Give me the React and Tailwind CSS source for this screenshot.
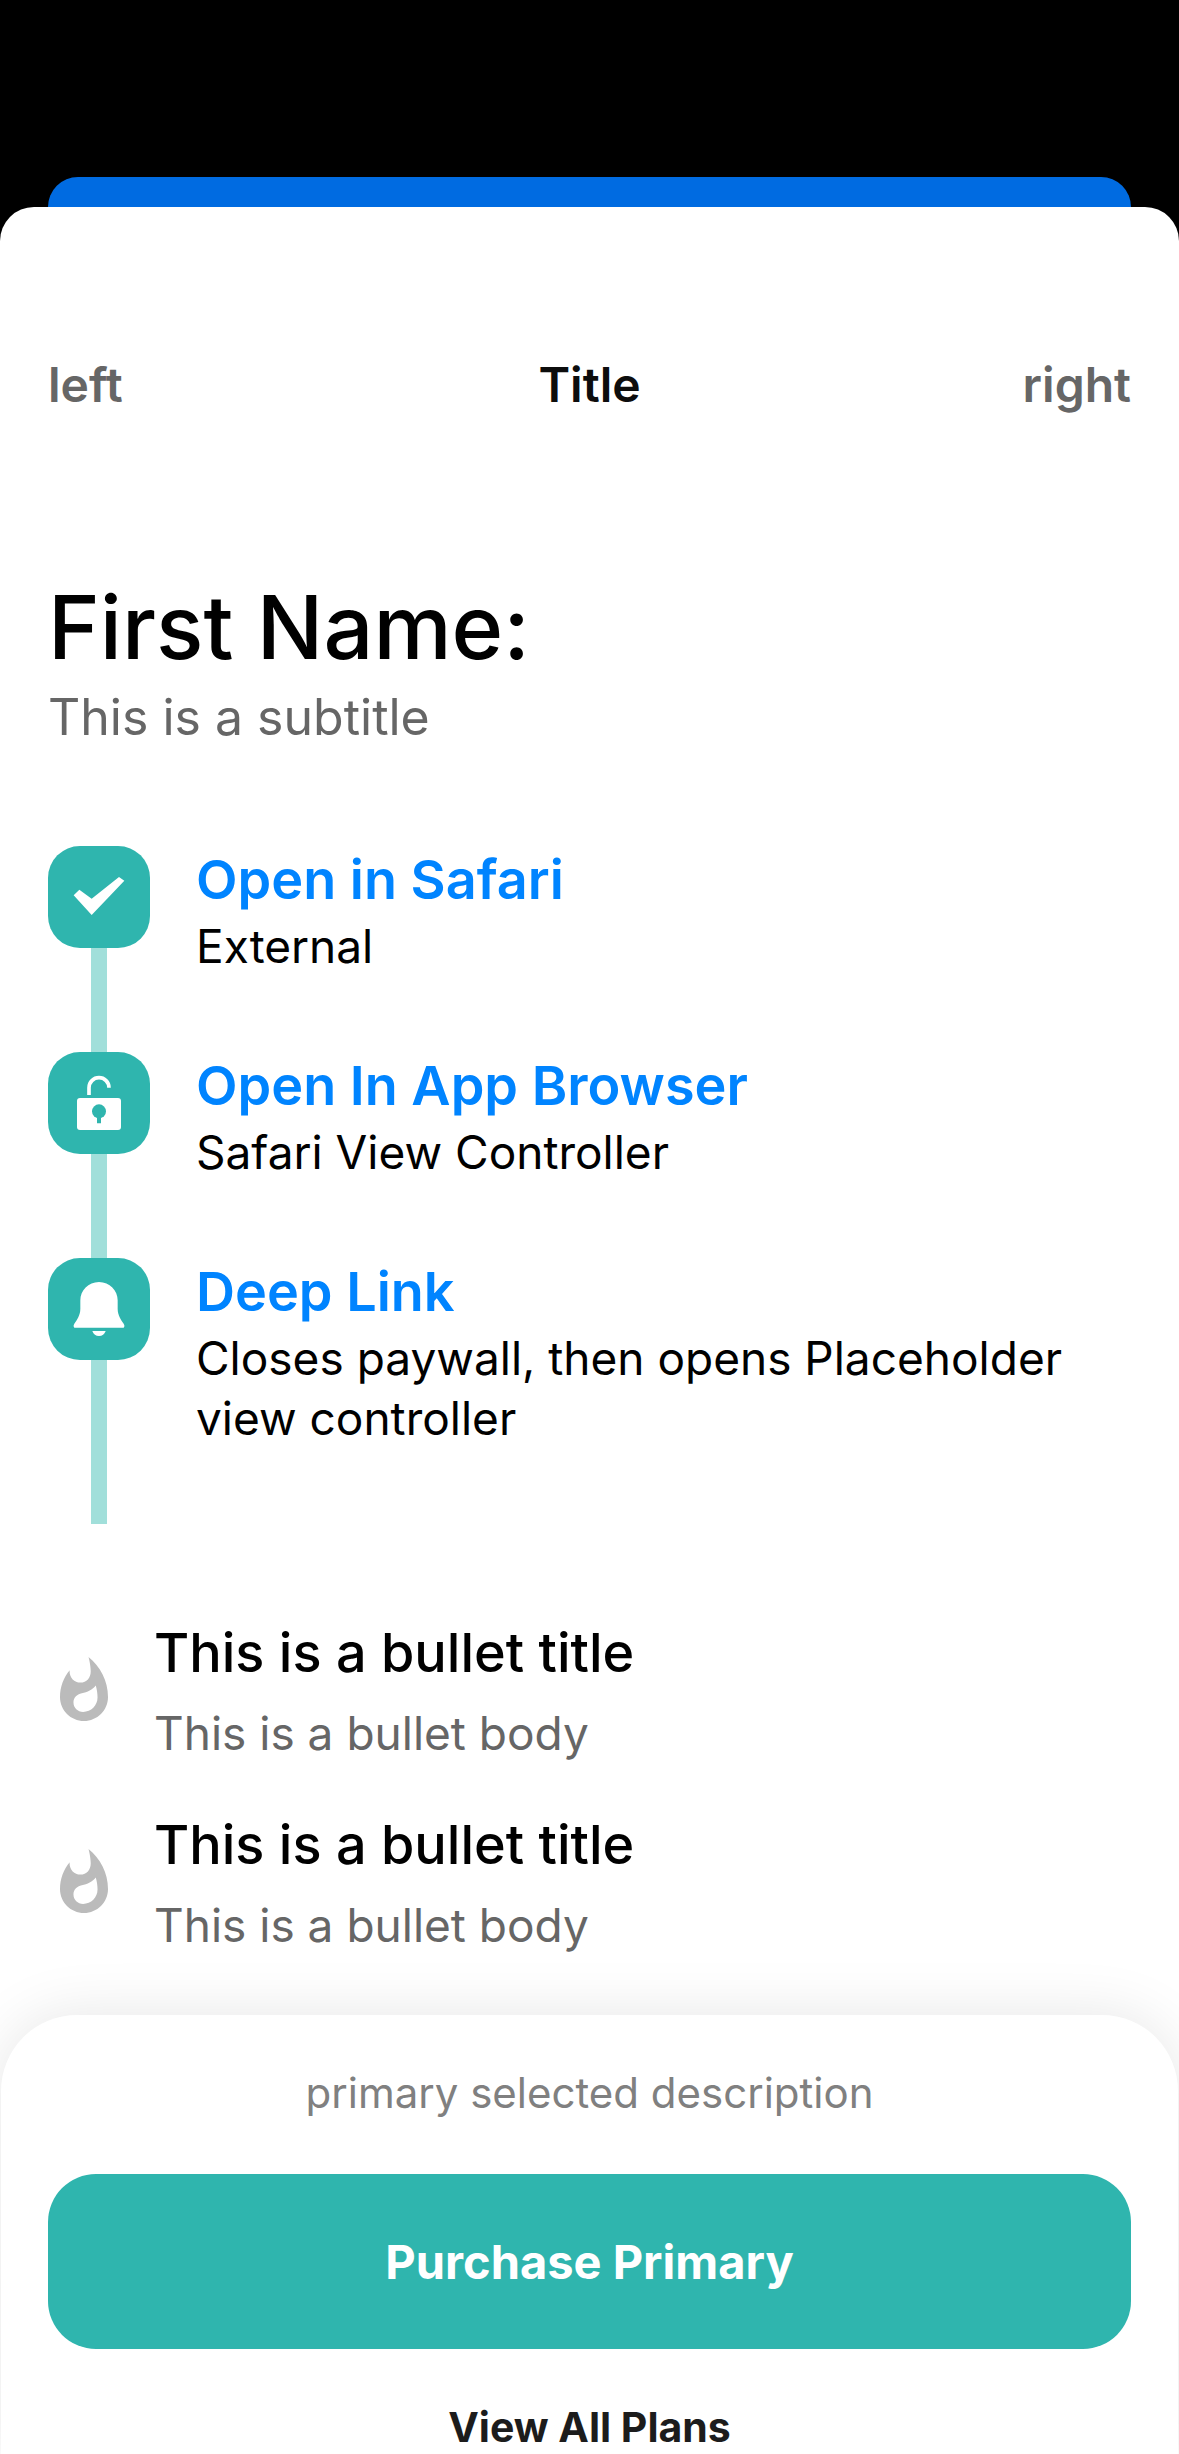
function CheckIcon() {
  return (
    <svg viewBox="0 0 306 306" className="size-full" fill="white" aria-hidden="true">
      <path d="M77 148 94 131 131 158 213 93 229 104 131 207Z" />
    </svg>
  );
}

function UnlockIcon() {
  return (
    <svg viewBox="0 0 306 306" className="size-full" aria-hidden="true">
      <path d="M123 129V107A30 30 0 0 1 183 107" fill="none" stroke="white" strokeWidth="11" />
      <rect x="87" y="138" width="132" height="96" rx="9" fill="white" />
      <circle cx="153" cy="178" r="21" fill="#2fb5ae" />
      <rect x="147" y="190" width="12" height="24" rx="1" fill="#2fb5ae" />
    </svg>
  );
}

function BellIcon() {
  return (
    <svg viewBox="0 0 306 306" className="size-full" fill="white" aria-hidden="true">
      <path d="M153 72C121 72 97 97 97 127V152C97 172 87 185 79 197C76 202 76 205 79 209H227C230 205 230 202 227 197C219 185 209 172 209 152V127C209 97 185 72 153 72Z" />
      <path d="M133 219H173C169 229 163 234 153 234S137 229 133 219Z" />
    </svg>
  );
}

function FlameIcon() {
  return (
    <svg viewBox="0 0 24 24" className="size-18 shrink-0" fill="#bbbbbb" aria-hidden="true">
      <path d="M13.5.67s.74 2.65.74 4.8c0 2.06-1.35 3.73-3.41 3.73-2.07 0-3.63-1.67-3.63-3.73l.03-.36C5.21 7.51 4 10.62 4 14c0 4.42 3.58 8 8 8s8-3.58 8-8C20 8.61 17.41 3.8 13.5.67zM11.71 19c-1.78 0-3.22-1.4-3.22-3.14 0-1.62 1.05-2.76 2.81-3.12 1.77-.36 3.6-1.21 4.62-2.58.39 1.29.59 2.65.59 4.04 0 2.65-2.15 4.8-4.8 4.8z" />
    </svg>
  );
}

const steps = [
  { title: "Open in Safari", body: "External", Icon: CheckIcon },
  { title: "Open In App Browser", body: "Safari View Controller", Icon: UnlockIcon },
  {
    title: "Deep Link",
    body: "Closes paywall, then opens Placeholder view controller",
    Icon: BellIcon,
  },
];

const bullets = [1, 2, 3];

function Step({ title, body, Icon }) {
  return (
    <li className="flex gap-[46px]">
      <div className="flex w-[102px] shrink-0 flex-col items-center">
        <div className="size-[102px] rounded-[32px] bg-[#2fb5ae]">
          <Icon />
        </div>
        <div className="w-4 flex-1 bg-[#a1dfda]" />
      </div>
      <div className="min-w-0 pb-[76px]">
        <h2 className="text-[54px] leading-[68px] font-semibold">
          <a href="#" className="text-[#0084ff]">{title}</a>
        </h2>
        <p className="mt-0.5 text-[46px] leading-[60px]">{body}</p>
      </div>
    </li>
  );
}

function Bullet() {
  return (
    <li className="flex items-center gap-[34px]">
      <FlameIcon />
      <div>
        <h3 className="text-[54px] leading-[68px] font-medium">This is a bullet title</h3>
        <p className="mt-4 text-[46px] leading-[60px] text-[#666666]">This is a bullet body</p>
      </div>
    </li>
  );
}

export default function App() {
  return (
    <div className="flex h-screen flex-col overflow-hidden bg-black pt-[177px] font-['Inter',sans-serif] text-black">
      <div className="mx-12 h-[30px] shrink-0 rounded-t-[32px] bg-[#006be1]" />
      <main className="flex min-h-0 flex-1 flex-col overflow-hidden rounded-t-[34px] bg-white">
        <div className="min-h-0 flex-1 overflow-hidden px-12 pt-[148px]">
          <header className="grid grid-cols-3 text-[48px] leading-[60px] font-semibold">
            <button type="button" className="justify-self-start text-[#666666]">left</button>
            <span className="justify-self-center text-[#0d0d0d]">Title</span>
            <button type="button" className="justify-self-end text-[#666666]">right</button>
          </header>
          <h1 className="mt-[158px] text-[88px] leading-[108px] font-medium">First Name:</h1>
          <p className="mt-1.5 text-[50px] leading-[60px] text-[#666666]">This is a subtitle</p>
          <ul className="mt-[99px]">
            {steps.map((step) => (
              <Step key={step.title} {...step} />
            ))}
          </ul>
          <ul className="mt-[95px] flex flex-col gap-12">
            {bullets.map((id) => (
              <Bullet key={id} />
            ))}
          </ul>
        </div>
        <footer className="relative mx-px flex shrink-0 flex-col items-center rounded-t-[76px] bg-white px-[47px] pt-[50px] pb-px shadow-[0_0_60px_rgba(0,0,0,0.1)]">
          <p className="text-[42px] leading-[56px] text-[#808080]">primary selected description</p>
          <button
            type="button"
            className="mt-[53px] h-[175px] w-full rounded-[48px] bg-[#2fb5ae] text-[47px] leading-[60px] font-bold text-white"
          >
            Purchase Primary
          </button>
          <button type="button" className="mt-[52px] text-[41px] leading-[52px] font-bold text-[#1c1c1c]">
            View All Plans
          </button>
        </footer>
      </main>
    </div>
  );
}
